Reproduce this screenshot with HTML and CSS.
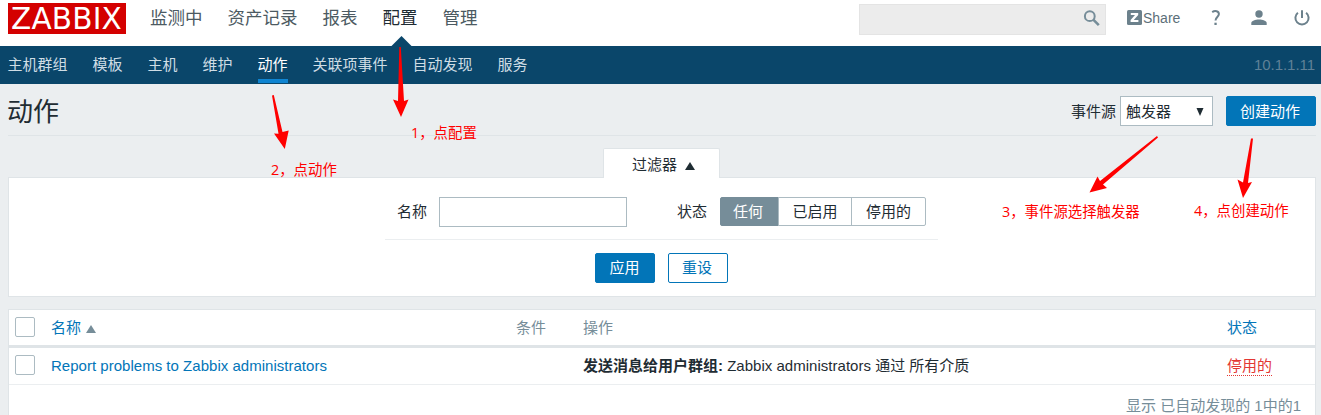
FILE: index.html
```html
<!DOCTYPE html>
<html lang="zh-CN">
<head>
<meta charset="utf-8">
<title>动作</title>
<link rel="stylesheet" href="styles.css">
</head>
<body>
<header class="top">
  <a class="logo">ZABBIX</a>
  <nav class="menu">
    <a>监测中</a><a>资产记录</a><a>报表</a><a class="menu-on">配置</a><a>管理</a>
  </nav>
  <div class="search">
    <svg width="18" height="18" viewBox="0 0 18 18"><circle cx="6.8" cy="6.2" r="4.9" fill="none" stroke="#768d99" stroke-width="2"/><path d="M10.3 9.7L15.8 15.2" stroke="#768d99" stroke-width="2.6"/></svg>
  </div>
  <a class="share"><span class="share-z"><svg width="15" height="15" viewBox="0 0 15 15"><rect width="15" height="15" rx="1.5" fill="#6c818c"/><path d="M3.8 3H11.2V5L6.8 10H11.4V12H3.6V10L8 5H3.8Z" fill="#fff"/></svg></span>Share</a>
  <svg class="ico help" width="10" height="16" viewBox="0 0 10 16"><path d="M1.2 2.1C4 .2 7.9.9 7.9 4.1C7.9 7 4.5 7.2 4.5 10.6" fill="none" stroke="#6c818c" stroke-width="2"/><rect x="3.4" y="12.7" width="2.3" height="2.3" fill="#6c818c"/></svg>
  <svg class="ico user" width="16" height="16" viewBox="0 0 16 16"><circle cx="8" cy="4" r="3.7" fill="#6c818c"/><path d="M.3 15V12.8C.3 10.9 4.4 9.4 8 9.4S15.7 10.9 15.7 12.8V15Z" fill="#6c818c"/></svg>
  <svg class="ico" width="16" height="16" viewBox="0 0 16 16"><path d="M8 .2V8M3.9 2.7A6.6 6.6 0 1 0 12.1 2.7" fill="none" stroke="#6c818c" stroke-width="2"/></svg>
</header>
<nav class="sub">
  <a>主机群组</a><a>模板</a><a>主机</a><a>维护</a><a class="sub-on">动作</a><a>关联项事件</a><a>自动发现</a><a>服务</a>
  <span class="server">10.1.1.11</span>
</nav>
<main class="page">
  <div class="head">
    <h1>动作</h1>
    <label class="src">事件源</label>
    <div class="select"><span>触发器</span><svg width="8" height="8" viewBox="0 0 8 8"><path d="M0.5 0H7.5L4 8Z" fill="#1f2c33"/></svg></div>
    <button class="btn create">创建动作</button>
  </div>
  <div class="tab">过滤器<svg width="10" height="8" viewBox="0 0 10 8"><path d="M0 8L5 0L10 8Z" fill="#1f2c33"/></svg></div>
  <section class="filter">
    <div class="fields">
      <label>名称</label><input class="name" type="text">
      <label class="state">状态</label>
      <div class="radio"><span class="radio-on">任何</span><span>已启用</span><span>停用的</span></div>
    </div>
    <div class="actions"><button class="btn">应用</button><button class="btn alt">重设</button></div>
  </section>
  <section class="table">
    <div class="row th"><i class="check"></i><a>名称 <svg class="sort" width="10" height="8" viewBox="0 0 10 8"><path d="M0 8L5 0L10 8Z" fill="#768d99"/></svg></a><span>条件</span><span>操作</span><a>状态</a></div>
    <div class="row td"><i class="check"></i><a class="latin">Report problems to Zabbix administrators</a><span></span><span><b>发送消息给用户群组:</b> <span class="latin">Zabbix administrators</span> 通过 所有介质</span><span><a class="off">停用的</a></span></div>
    <div class="foot">显示 已自动发现的 1中的1</div>
  </section>
</main>
<svg class="notes" width="1321" height="415" viewBox="0 0 1321 415">
  <path class="peak" d="M391 46.5L401.5 36L412 46.5Z"/>
  <path d="M399.3 47H400.8L404 101L408.5 99.5L401 117L393 99.5L398 101Z"/>
  <path d="M272 95.5L273.8 95L282.5 132L288.7 130.5L284.8 149L274 133.5L278.5 133.7Z"/>
  <path d="M1157 136L1158 137.5L1103 184.5L1107 188L1089.5 192.5L1097.5 176.5L1100 181Z"/>
  <path d="M1251 138.5H1253L1248 183L1252 182L1243 198L1237.5 179.5L1243 182.5Z"/>
  <text x="411" y="138">1，点配置</text>
  <text x="271" y="175">2，点动作</text>
  <text x="1002" y="217">3，事件源选择触发器</text>
  <text x="1194" y="216">4，点创建动作</text>
</svg>
</body>
</html>
```
FILE: styles.css
```css
* { box-sizing: border-box; }
body {
  margin: 0;
  height: 415px;
  overflow: hidden;
  background: #ebeef0;
  color: #1f2c33;
  font: 15px/20px "Liberation Sans", "Noto Sans CJK SC", sans-serif;
}
svg { flex: none; }
.top { display: flex; height: 46px; background: #fff; padding: 3px 11px 0 8px; }
.logo {
  width: 118px; height: 31px; padding-left: 3px;
  background: #d40000; color: #fff;
  font: 29.5px/33px "DejaVu Sans", sans-serif; letter-spacing: 0.2px;
}
.menu { display: flex; gap: 25px; margin-left: 24px; font-size: 17.5px; line-height: 30px; color: #4c5a62; }
.menu-on { color: #1f2c33; }
.search {
  display: flex; justify-content: flex-end; width: 247px; height: 31px;
  margin: 1px 21px 0 auto; padding: 5px 4px 0 0; background: #ececec; border: 1px solid #e4e4e4;
}
.share { display: flex; gap: 1px; width: 54px; line-height: 30px; font-size: 14px; color: #5c6f79; }
.share-z { padding-top: 7px; height: 30px; line-height: 0; }
.ico { margin-top: 7px; }
.help { margin-left: 30px; }
.user { margin: 7px 27px 0 30px; }
.sub { display: flex; gap: 25px; height: 38px; padding: 0 6px 0 7.5px; background: #0a466a; color: #cfdde5; line-height: 37px; }
.sub a { height: 37px; }
.sub .sub-on { color: #fff; border-bottom: 4px solid #0f84d1; }
.server { margin-left: auto; color: #5f8197; letter-spacing: -0.05px; }
.page { padding: 0 5px 0 8px; }
.head { display: flex; height: 52px; padding-top: 12px; border-bottom: 1px solid #dfe4e7; }
h1 { margin: 0 auto 0 -1px; font-size: 26px; font-weight: 400; line-height: 33px; }
.src { line-height: 32px; margin-right: 4px; }
.select {
  display: flex; align-items: center; justify-content: space-between; width: 93px; height: 30px;
  margin-right: 13px; padding: 1px 8px 0 5px; background: #fff; border: 1px solid #acbbc2;
}
.btn {
  width: 60px; height: 30px; padding: 0 1px 0 0; border: 1px solid #0275b8; border-radius: 2px;
  background: #0275b8; color: #fff; font: inherit;
}
.create { width: 90px; padding: 1px 2px 0 0; }
.alt { background: #fff; color: #0275b8; padding-right: 2px; }
.tab {
  position: relative; display: flex; align-items: center; gap: 8px; width: 117px; height: 30px;
  margin: 12px 0 -1px 595px; padding: 2px 0 0 28px; background: #fff;
  border: 1px solid #dfe4e7; border-bottom: 0; border-radius: 2px 2px 0 0;
}
.tab svg { margin-top: 3px; }
.filter { height: 120px; padding-top: 19px; background: #fff; border: 1px solid #dfe4e7; }
.fields { display: flex; width: 553px; height: 43px; margin-left: 376px; padding-left: 12px; border-bottom: 1px solid #ebeef0; line-height: 29px; }
.name { width: 188px; height: 30px; margin: 0 50px 0 12px; border: 1px solid #acbbc2; padding: 0; }
.state { margin-right: 13px; }
.radio { display: flex; height: 29px; line-height: 27px; }
.radio span { width: 74px; margin-right: -1px; border: 1px solid #acbbc2; text-align: center; }
.radio span:last-child { width: 75px; border-radius: 0 2px 2px 0; margin-right: 0; }
.radio .radio-on { width: 59px; padding-right: 3px; background: #768d99; border-color: #768d99; color: #fff; border-radius: 2px 0 0 2px; }
.actions { display: flex; gap: 13px; margin: 13px 0 0 586px; }
.table { height: 120px; margin-top: 12px; background: #fff; border: 1px solid #dfe4e7; }
.row { display: grid; grid-template-columns: 36px 465px 67px 644px 80px; padding-left: 6px; }
.th { height: 38px; border-bottom: 3px solid #dfe4e7; color: #768d99; line-height: 35px; }
.td { height: 37px; border-bottom: 1px solid #ebeef0; line-height: 36px; }
.check { width: 20px; height: 20px; margin-top: 7px; border: 1px solid #acbbc2; border-radius: 2px; }
.row a { color: #0275b8; }
.sort { margin-left: 1px; }
.latin { letter-spacing: 0.02px; }
.row .off { display: inline-block; height: 20px; line-height: 20px; color: #e33734; border-bottom: 1px dotted #e33734; }
.foot { padding: 11px 14px 0 0; text-align: right; color: #768d99; }
.notes { position: absolute; left: 0; top: 0; fill: #f00; font: 14.4px "Open Sans", "Noto Sans CJK SC", sans-serif; }
.peak { fill: #0a466a; }
```
